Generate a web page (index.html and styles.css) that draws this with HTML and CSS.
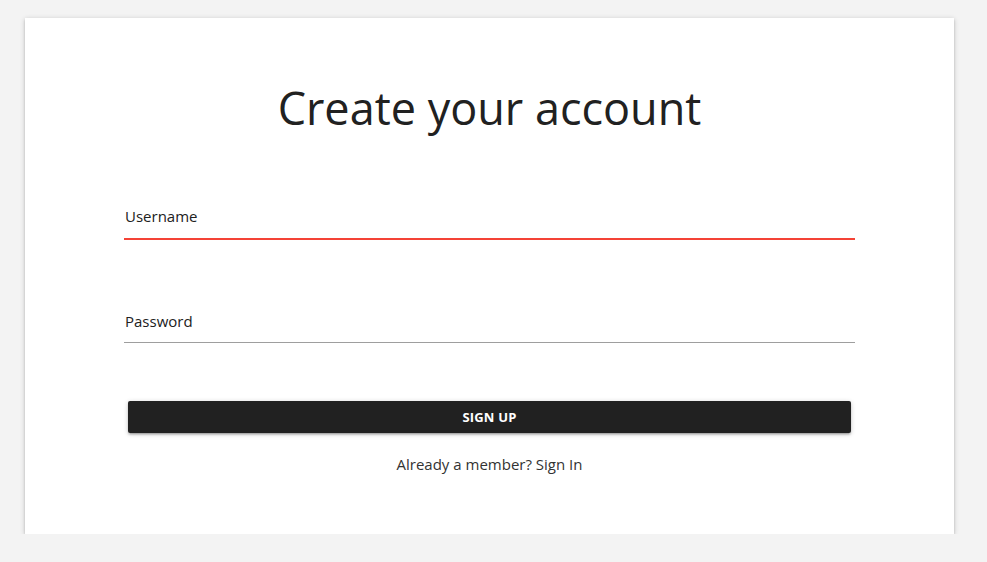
FILE: index.html
```html
<!DOCTYPE html>
<html lang="en">
<head>
<meta charset="utf-8">
<title>Create your account</title>
<link rel="stylesheet" href="styles.css">
</head>
<body>
<main class="card">
  <h1 class="title">Create your account</h1>
  <form class="form">
    <label class="field field--active">
      <span class="field-label">Username</span>
      <span class="field-line"></span>
    </label>
    <label class="field">
      <span class="field-label">Password</span>
      <span class="field-line"></span>
    </label>
    <button type="button" class="btn">SIGN UP</button>
    <p class="switch">Already a member? Sign In</p>
  </form>
</main>
</body>
</html>
```
FILE: styles.css
```css
* { box-sizing: border-box; }
html, body { margin: 0; padding: 0; }
body {
  background: #f3f3f3;
  font-family: "Open Sans", "Liberation Sans", sans-serif;
  color: #212121;
  padding: 18px 33px 0 25px;
}
.card {
  background: #fff;
  width: 929px;
  height: 516px;
  padding: 60px 99px 0;
  box-shadow: 0 2px 2px 0 rgba(0,0,0,0.14), 0 3px 1px -2px rgba(0,0,0,0.12), 0 1px 5px 0 rgba(0,0,0,0.2);
}
.title {
  margin: 0;
  text-align: center;
  font-weight: 400;
  font-size: 45px;
  line-height: 60px;
  color: #212121;
}
.form { display: flex; flex-direction: column; margin-top: 54px; }
.field { display: flex; flex-direction: column; height: 106px; padding-top: 14px; }
.field + .field { height: 58px; padding-top: 13px; }
.field-label { font-size: 15px; line-height: 20px; color: #212121; padding-left: 1px; }
.field-line { display: block; margin-top: 11px; height: 1px; background: #9e9e9e; }
.field--active .field-line { height: 2px; background: #f44336; margin-top: 12px; }
.btn {
  margin: 45px 4px 0;
  height: 32px;
  border: 0;
  border-radius: 2px;
  background: #212121;
  color: #fff;
  font-family: "Open Sans", "Liberation Sans", sans-serif;
  font-weight: 700;
  font-size: 13px;
  letter-spacing: 0.2px;
  box-shadow: 0 2px 2px 0 rgba(0,0,0,0.14), 0 3px 1px -2px rgba(0,0,0,0.12), 0 1px 5px 0 rgba(0,0,0,0.2);
}
.switch { margin: 20px 0 0; text-align: center; font-size: 15px; line-height: 22px; color: #333; }
```
